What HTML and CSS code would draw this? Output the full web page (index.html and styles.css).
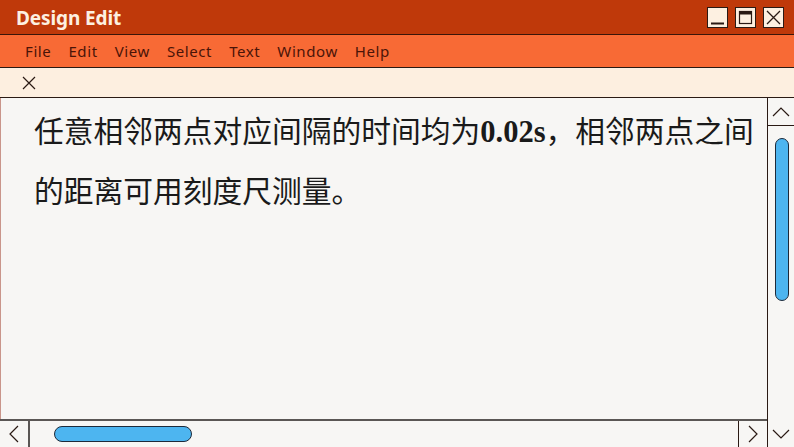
FILE: index.html
```html
<!DOCTYPE html>
<html lang="zh-CN">
<head>
  <meta charset="UTF-8">
  <meta name="viewport" content="width=device-width, initial-scale=1.0">
  <title>Design Edit</title>
  <link rel="stylesheet" href="styles.css">
</head>
<body>
  <div class="window">
    <!-- Title bar -->
    <div class="titlebar">
      <span class="title">Design Edit</span>
      <div class="win-buttons">
        <span class="win-btn">
          <svg width="19" height="19" viewBox="0 0 19 19"><path d="M3 15.5h13" stroke="#2a1a14" stroke-width="2"/></svg>
        </span>
        <span class="win-btn">
          <svg width="19" height="19" viewBox="0 0 19 19"><rect x="3.5" y="3.5" width="12" height="12" fill="none" stroke="#2a1a14" stroke-width="1.2"/><rect x="3.5" y="3.5" width="12" height="3" fill="#2a1a14"/></svg>
        </span>
        <span class="win-btn">
          <svg width="19" height="19" viewBox="0 0 19 19"><path d="M3 3l13 13M16 3L3 16" stroke="#2a1a14" stroke-width="1.3"/></svg>
        </span>
      </div>
    </div>

    <!-- Menu bar -->
    <div class="menubar">
      <span>File</span>
      <span>Edit</span>
      <span>View</span>
      <span>Select</span>
      <span>Text</span>
      <span>Window</span>
      <span>Help</span>
    </div>

    <!-- Tab row -->
    <div class="toolbar">
      <svg class="tab-close" width="14" height="14" viewBox="0 0 14 14"><path d="M1 1l12 12M13 1L1 13" stroke="#2a1a14" stroke-width="1.2"/></svg>
    </div>

    <!-- Editor area -->
    <div class="main">
      <div class="left">
        <div class="editor">
          <p class="text">任意相邻两点对应间隔的时间均为<b>0.02s</b>，相邻两点之间<br>的距离可用刻度尺测量。</p>
        </div>
        <div class="hscroll">
          <span class="arrow-box left-box">
            <svg width="14" height="20" viewBox="0 0 14 20"><path d="M11 2L3 10l8 8" fill="none" stroke="#2a1a14" stroke-width="1.2"/></svg>
          </span>
          <div class="htrack"><span class="hthumb"></span></div>
          <span class="arrow-box right-box">
            <svg width="14" height="20" viewBox="0 0 14 20"><path d="M3 2l8 8-8 8" fill="none" stroke="#2a1a14" stroke-width="1.2"/></svg>
          </span>
        </div>
      </div>
      <div class="vscroll">
        <span class="up-box">
          <svg width="20" height="14" viewBox="0 0 20 14"><path d="M2 11l8-8 8 8" fill="none" stroke="#2a1a14" stroke-width="1.2"/></svg>
        </span>
        <div class="vtrack"><span class="vthumb"></span></div>
        <span class="down-box">
          <svg width="20" height="14" viewBox="0 0 20 14"><path d="M2 3l8 8 8-8" fill="none" stroke="#2a1a14" stroke-width="1.2"/></svg>
        </span>
      </div>
    </div>
  </div>
</body>
</html>
```

FILE: styles.css
```css
/* General Styles */
body {
  margin: 0;
  padding: 0;
  font-family: "Noto Sans", Arial, sans-serif;
  background-color: #f7f6f4;
}

.window {
  width: 794px;
  height: 447px;
  display: flex;
  flex-direction: column;
  overflow: hidden;
}

/* Title bar */
.titlebar {
  height: 34px;
  background-color: #bf390a; /* Dark orange */
  border-bottom: 1px solid #3a160a;
  display: flex;
  align-items: center;
  justify-content: space-between;
  padding: 0 10px 0 16px;
}

.title {
  color: #fdf0e1;
  font-weight: bold;
  font-size: 19px;
  letter-spacing: -0.1px;
  margin-top: 1px;
}

.win-buttons {
  display: flex;
  gap: 7px;
}

.win-btn {
  width: 19px;
  height: 19px;
  background-color: #fdf0e1;
  border: 1px solid #2a1a14;
  display: flex;
}

/* Menu bar */
.menubar {
  height: 32px;
  background-color: #f86a35;
  border-bottom: 1px solid #2a1a14;
  display: flex;
  align-items: center;
  gap: 17px;
  padding-left: 25px;
  font-size: 15px;
  letter-spacing: 0.6px;
  color: #4a1408;
}

/* Tab row */
.toolbar {
  height: 29px;
  background-color: #fdefe0;
  border-bottom: 1px solid #2a1a14;
  display: flex;
  align-items: center;
  padding-left: 22px;
}

/* Editor */
.main {
  flex: 1;
  display: flex;
  min-height: 0;
}

.left {
  flex: 1;
  display: flex;
  flex-direction: column;
}

.editor {
  flex: 1;
  border-left: 1px solid #c9958a;
  padding: 4px 0 0 33px;
}

.text {
  margin: 0;
  font-family: "Liberation Serif", "Noto Sans CJK SC", serif;
  font-size: 29.75px;
  line-height: 60px;
  color: #1a1a1a;
  white-space: nowrap;
}

.text b {
  font-size: 30.5px;
}

/* Horizontal scrollbar */
.hscroll {
  height: 26px;
  border-top: 2px solid #5a5654;
  display: flex;
}

.arrow-box {
  width: 28px;
  display: flex;
  align-items: center;
  justify-content: center;
}

.left-box {
  border-right: 2px solid #5a5654;
}

.right-box {
  border-left: 1px solid #2a1a14;
}

.htrack {
  flex: 1;
  display: flex;
  align-items: center;
  padding-left: 24px;
}

.hthumb {
  width: 136px;
  height: 14px;
  background-color: #4db5f0;
  border: 1px solid #1d2a3a;
  border-radius: 8px;
}

/* Vertical scrollbar */
.vscroll {
  width: 26px;
  border-left: 1px solid #2a1a14;
  display: flex;
  flex-direction: column;
}

.up-box {
  height: 27px;
  border-bottom: 1px solid #2a1a14;
  display: flex;
  align-items: center;
  justify-content: center;
}

.vtrack {
  flex: 1;
  padding: 12px 0 0 7px;
}

.vthumb {
  display: block;
  width: 12px;
  height: 161px;
  background-color: #4db5f0;
  border: 1px solid #1d2a3a;
  border-radius: 8px;
}

.down-box {
  height: 27px;
  display: flex;
  align-items: center;
  justify-content: center;
}
```
